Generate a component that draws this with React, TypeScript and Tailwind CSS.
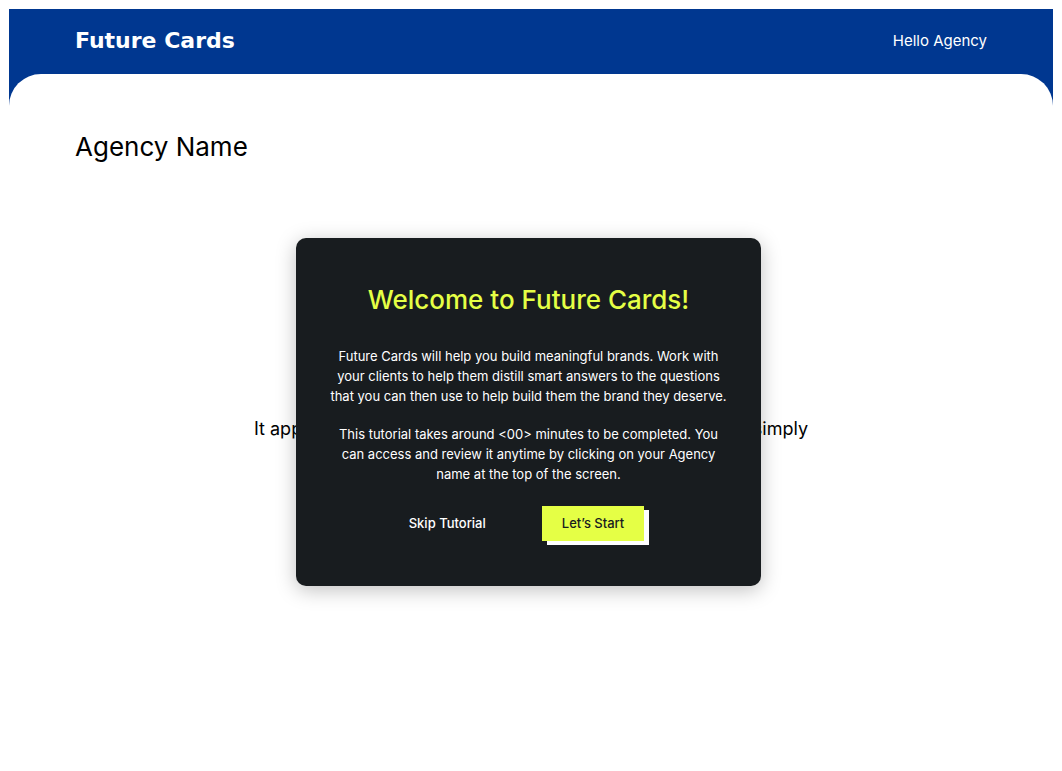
import React from "react";

function Header() {
  return (
    <header className="flex h-[97px] items-start justify-between bg-[#003790] px-[66px] pt-[18px] text-white">
      <a
        href="#home"
        className="font-['DejaVu_Sans',sans-serif] text-[22px] leading-7 font-bold"
      >
        Future Cards
      </a>
      <a href="#agency" className="text-[15px] leading-7">
        Hello Agency
      </a>
    </header>
  );
}

function WelcomeDialog() {
  return (
    <div className="absolute inset-x-0 top-[238px] flex justify-center pr-[5px]">
      <section
        role="dialog"
        aria-labelledby="welcome-title"
        className="w-[465px] rounded-[10px] bg-[#181c1f] px-8 pt-11 pb-[45px] text-center text-white shadow-[0_4px_20px_rgba(0,0,0,0.25)]"
      >
        <h2 id="welcome-title" className="text-[26px] leading-9 font-medium text-[#e5ff45]">
          Welcome to Future Cards!
        </h2>
        <div className="mt-7 flex flex-col gap-[18px] text-[13px] leading-5">
          <p>
            Future Cards will help you build meaningful brands. Work with
            <br />
            your clients to help them distill smart answers to the questions
            <br />
            that you can then use to help build them the brand they deserve.
          </p>
          <p>
            This tutorial takes around &lt;00&gt; minutes to be completed. You
            <br />
            can access and review it anytime by clicking on your Agency
            <br />
            name at the top of the screen.
          </p>
        </div>
        <div className="mt-[22px] flex items-center justify-center gap-9 pr-6 text-[13px] font-medium">
          <button type="button" className="h-[35px] px-5">
            Skip Tutorial
          </button>
          <button
            type="button"
            className="h-[35px] bg-[#e5ff45] px-5 text-[#181c1f] shadow-[5px_4px_0_#ffffff]"
          >
            Let’s Start
          </button>
        </div>
      </section>
    </div>
  );
}

export default function App() {
  return (
    <div className="relative min-h-screen bg-white p-[9px] font-['Inter',sans-serif] text-black">
      <Header />
      <main className="-mt-8 rounded-t-[32px] bg-white px-[66px] pt-[55px]">
        <h1 className="text-[26px] leading-9">Agency Name</h1>
        <p className="mt-[250px] text-center text-[18px] leading-7">
          It appears that you do not have any projects yet. To begin, simply
        </p>
      </main>
      <WelcomeDialog />
    </div>
  );
}
